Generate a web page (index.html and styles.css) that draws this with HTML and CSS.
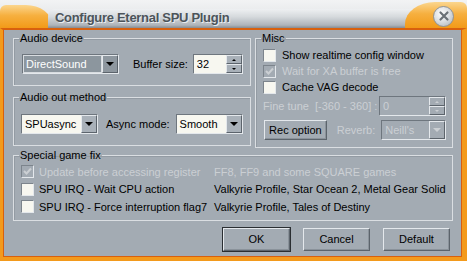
FILE: index.html
```html
<!DOCTYPE html>
<html lang="en">
<head>
    <meta charset="UTF-8">
    <title>Configure Eternal SPU Plugin</title>
    <link rel="stylesheet" href="styles.css">
</head>
<body>
    <div class="window">
        <!-- title bar -->
        <div class="titlebar">
            <div class="tab-left"></div>
            <div class="caption">Configure Eternal SPU Plugin</div>
            <div class="tab-right">
                <span class="close">
                    <svg width="12" height="12" viewBox="0 0 12 12">
                        <path d="M2.5 2.5 L9.5 9.5 M9.5 2.5 L2.5 9.5" stroke="#6a7076" stroke-width="2.2" stroke-linecap="round"/>
                    </svg>
                </span>
            </div>
        </div>

        <div class="frame">
            <div class="top">
                <div class="left-col">
                    <fieldset class="group audio-device">
                        <legend>Audio device</legend>
                        <div class="row">
                            <div class="combo focused device-combo"><span class="value">DirectSound</span><span class="arrow"></span></div>
                            <span class="label buffer-label">Buffer size:</span>
                            <div class="spin buffer-spin">
                                <span class="value">32</span>
                                <span class="spin-btns"><span class="up"></span><span class="down"></span></span>
                            </div>
                        </div>
                    </fieldset>

                    <fieldset class="group audio-out">
                        <legend>Audio out method</legend>
                        <div class="row">
                            <div class="combo out-combo"><span class="value">SPUasync</span><span class="arrow"></span></div>
                            <span class="label async-label">Async mode:</span>
                            <div class="combo mode-combo"><span class="value">Smooth</span><span class="arrow"></span></div>
                        </div>
                    </fieldset>
                </div>

                <fieldset class="group misc">
                    <legend>Misc</legend>
                    <div class="check-row"><span class="check"></span><span>Show realtime config window</span></div>
                    <div class="check-row disabled"><span class="check checked"></span><span>Wait for XA buffer is free</span></div>
                    <div class="check-row"><span class="check"></span><span>Cache VAG decode</span></div>
                    <div class="row between tune-row disabled">
                        <span>Fine tune &nbsp;[-360 - 360] :</span>
                        <div class="spin tune-spin">
                            <span class="value">0</span>
                            <span class="spin-btns"><span class="up"></span><span class="down"></span></span>
                        </div>
                    </div>
                    <div class="row rec-row">
                        <button class="btn rec-btn">Rec option</button>
                        <span class="label reverb-label disabled">Reverb:</span>
                        <div class="combo reverb-combo disabled"><span class="value">Neill's</span><span class="arrow"></span></div>
                    </div>
                </fieldset>
            </div>

            <fieldset class="group game-fix">
                <legend>Special game fix</legend>
                <div class="fix-grid">
                    <div class="check-row disabled"><span class="check checked"></span><span>Update before accessing register</span></div>
                    <div class="fix-note disabled">FF8, FF9 and some SQUARE games</div>
                    <div class="check-row"><span class="check"></span><span>SPU IRQ - Wait CPU action</span></div>
                    <div class="fix-note">Valkyrie Profile, Star Ocean 2, Metal Gear Solid</div>
                    <div class="check-row"><span class="check"></span><span>SPU IRQ - Force interruption flag7</span></div>
                    <div class="fix-note">Valkyrie Profile, Tales of Destiny</div>
                </div>
            </fieldset>

            <div class="buttons">
                <button class="btn dialog-btn default-btn">OK</button>
                <button class="btn dialog-btn">Cancel</button>
                <button class="btn dialog-btn">Default</button>
            </div>
        </div>
    </div>
</body>
</html>
```

FILE: styles.css
```css
:root {
    --body: #a3abb3;
    --orange: #f39a1c;
    --orange-dark: #d8600e;
    --light: #e4e8ec;
    --shadow: #626a72;
    --disabled: #cbcfd3;
    --field: #f7f7f0;
}

body {
    margin: 0;
    background: #ffffff;
}

.window {
    width: 467px;
    height: 261px;
    display: flex;
    flex-direction: column;
    font-family: "Liberation Sans", Arial, sans-serif;
    font-size: 11px;
    color: #000;
    overflow: hidden;
}

/* title bar */
.titlebar {
    height: 28px;
    flex: none;
    display: flex;
    align-items: flex-end;
    background: linear-gradient(#f2f3f4, #dcdfe2);
}

.tab-left {
    width: 52px;
    height: 23px;
    flex: none;
    border-radius: 6px 26px 0 0 / 6px 20px 0 0;
    background: linear-gradient(#fbd68e, #f6b040 45%, #f29a18);
}

.caption {
    flex: 1;
    height: 19px;
    margin-left: -4px;
    padding-left: 7px;
    border-radius: 7px 0 0 0;
    background: linear-gradient(#eef0f2, #d6dadd 40%, #aeb4ba 85%, #868c92);
    font-weight: bold;
    font-size: 13px;
    line-height: 17px;
    color: #4c545a;
    text-shadow: 1px 1px 0 #e9ecef;
    letter-spacing: -0.3px;
    white-space: nowrap;
}

.tab-right {
    width: 62px;
    height: 26px;
    flex: none;
    margin-left: -8px;
    display: flex;
    align-items: center;
    justify-content: flex-end;
    padding-right: 13px;
    box-sizing: border-box;
    border-radius: 30px 6px 0 0 / 22px 6px 0 0;
    background: linear-gradient(#fbd68e, #f6b040 45%, #f29a18);
}

.close {
    width: 19px;
    height: 19px;
    margin-top: 2px;
    border-radius: 50%;
    border: 1px solid #8d9399;
    background: radial-gradient(circle at 40% 35%, #ffffff, #dde0e3 45%, #a9afb5);
    display: flex;
    align-items: center;
    justify-content: center;
}

/* client area */
.frame {
    flex: 1;
    min-height: 0;
    background: var(--body);
    border-top: 2px solid var(--orange-dark);
    border-left: 3px solid var(--orange);
    border-right: 5px solid var(--orange);
    border-bottom: 4px solid var(--orange);
    box-shadow: inset 1px 0 0 var(--orange-dark), inset -1px -1px 0 var(--orange-dark);
    padding: 2px 9px 0 10px;
}

.top {
    display: grid;
    grid-template-columns: 238px 1fr;
    column-gap: 4px;
}

.left-col {
    display: flex;
    flex-direction: column;
    gap: 5px;
}

.group {
    margin: 0;
    min-width: 0;
    border: 1px solid #dadee2;
    box-shadow: inset 1px 1px 0 #939ba3;
    padding: 9px 7px 11px 7px;
}

.group legend {
    padding: 0 1px;
    margin-left: -2px;
    line-height: 13px;
    font-size: 11px;
}

.audio-out {
    padding-top: 10px;
}

.misc {
    padding: 2px 6px 7px 7px;
}

.game-fix {
    margin-top: 1px;
    padding: 1px 7px 4px 7px;
}

.row {
    display: flex;
    align-items: center;
    white-space: nowrap;
}

.between {
    justify-content: space-between;
}

.label {
    white-space: nowrap;
}

.buffer-label {
    margin: 0 5px 0 14px;
}

.async-label {
    margin: 0 6px 0 8px;
}

.reverb-label {
    margin: 0 6px 0 10px;
}

.disabled {
    color: var(--disabled);
}

/* combo boxes */
.combo {
    display: flex;
    height: 20px;
    box-sizing: border-box;
    border: 1px solid;
    border-color: #6e767e var(--light) var(--light) #6e767e;
    background: var(--field);
}

.combo .value {
    flex: 1;
    padding-left: 3px;
    line-height: 18px;
    white-space: nowrap;
    overflow: hidden;
}

.combo .arrow {
    width: 16px;
    flex: none;
    box-sizing: border-box;
    border: 1px solid;
    border-color: var(--light) #5c646c #5c646c var(--light);
    background: #a9b1b9;
    display: flex;
    align-items: center;
    justify-content: center;
}

.combo .arrow::after {
    content: "";
    border-left: 4px solid transparent;
    border-right: 4px solid transparent;
    border-top: 4px solid #000;
}

.combo.focused .value {
    background: #8c969e;
    color: #fff;
    box-shadow: inset 0 0 0 1px #d8dce0;
}

.combo.focused .arrow {
    background: #8e979f;
}

.combo.disabled {
    background: var(--body);
}

.combo.disabled .arrow {
    background: var(--body);
}

.combo.disabled .arrow::after {
    border-top-color: var(--disabled);
}

.device-combo {
    width: 97px;
    margin-left: 1px;
}

.out-combo {
    width: 77px;
}

.mode-combo {
    width: 67px;
}

.reverb-combo {
    width: 67px;
}

/* spin fields */
.spin {
    display: flex;
    height: 20px;
    box-sizing: border-box;
    border: 1px solid;
    border-color: #6e767e var(--light) var(--light) #6e767e;
    background: var(--field);
}

.spin .value {
    flex: 1;
    padding-left: 3px;
    line-height: 18px;
}

.spin-btns {
    width: 16px;
    display: flex;
    flex-direction: column;
}

.spin-btns span {
    flex: 1;
    box-sizing: border-box;
    border: 1px solid;
    border-color: var(--light) #5c646c #5c646c var(--light);
    background: #a9b1b9;
    display: flex;
    align-items: center;
    justify-content: center;
}

.spin-btns .up::after {
    content: "";
    border-left: 2px solid transparent;
    border-right: 2px solid transparent;
    border-bottom: 2px solid #000;
}

.spin-btns .down::after {
    content: "";
    border-left: 2px solid transparent;
    border-right: 2px solid transparent;
    border-top: 2px solid #000;
}

.buffer-spin {
    width: 50px;
}

.tune-spin {
    width: 67px;
    background: var(--body);
}

.tune-spin .spin-btns span {
    background: var(--body);
}

.tune-spin .spin-btns .up::after {
    border-bottom-color: var(--disabled);
}

.tune-spin .spin-btns .down::after {
    border-top-color: var(--disabled);
}

.tune-row {
    margin-top: 1px;
}

.rec-row {
    margin-top: 4px;
}

/* check boxes */
.check-row {
    display: flex;
    align-items: center;
    gap: 6px;
    height: 16px;
    white-space: nowrap;
}

.check {
    width: 13px;
    height: 13px;
    flex: none;
    box-sizing: border-box;
    border: 1px solid;
    border-color: #7c848c var(--light) var(--light) #7c848c;
    background: var(--field);
}

.check.checked {
    background: var(--body) url("data:image/svg+xml,%3Csvg xmlns='http://www.w3.org/2000/svg' width='11' height='11'%3E%3Cpath d='M2 5 L4.5 7.5 L9 2.5' fill='none' stroke='%23cbcfd3' stroke-width='2'/%3E%3C/svg%3E") center no-repeat;
}

.fix-grid {
    display: grid;
    grid-template-columns: 193px 1fr;
    grid-auto-rows: 17.5px;
    align-items: center;
}

.fix-grid .check-row {
    gap: 5px;
}

.fix-note {
    white-space: nowrap;
}

/* buttons */
.btn {
    font-family: inherit;
    font-size: 11px;
    color: #000;
    background: var(--body);
    border: 1px solid;
    border-color: var(--light) #5c646c #5c646c var(--light);
    box-shadow: inset -1px -1px 0 #8a929a;
    padding: 0;
}

.rec-btn {
    width: 65px;
    height: 20px;
    margin-left: 1px;
}

.buttons {
    display: flex;
    justify-content: flex-end;
    gap: 13px;
    margin-top: 7px;
    padding-right: 3px;
}

.dialog-btn {
    width: 67px;
    height: 23px;
}

.default-btn {
    outline: 1px solid #2a2e32;
    outline-offset: 0;
}
```
